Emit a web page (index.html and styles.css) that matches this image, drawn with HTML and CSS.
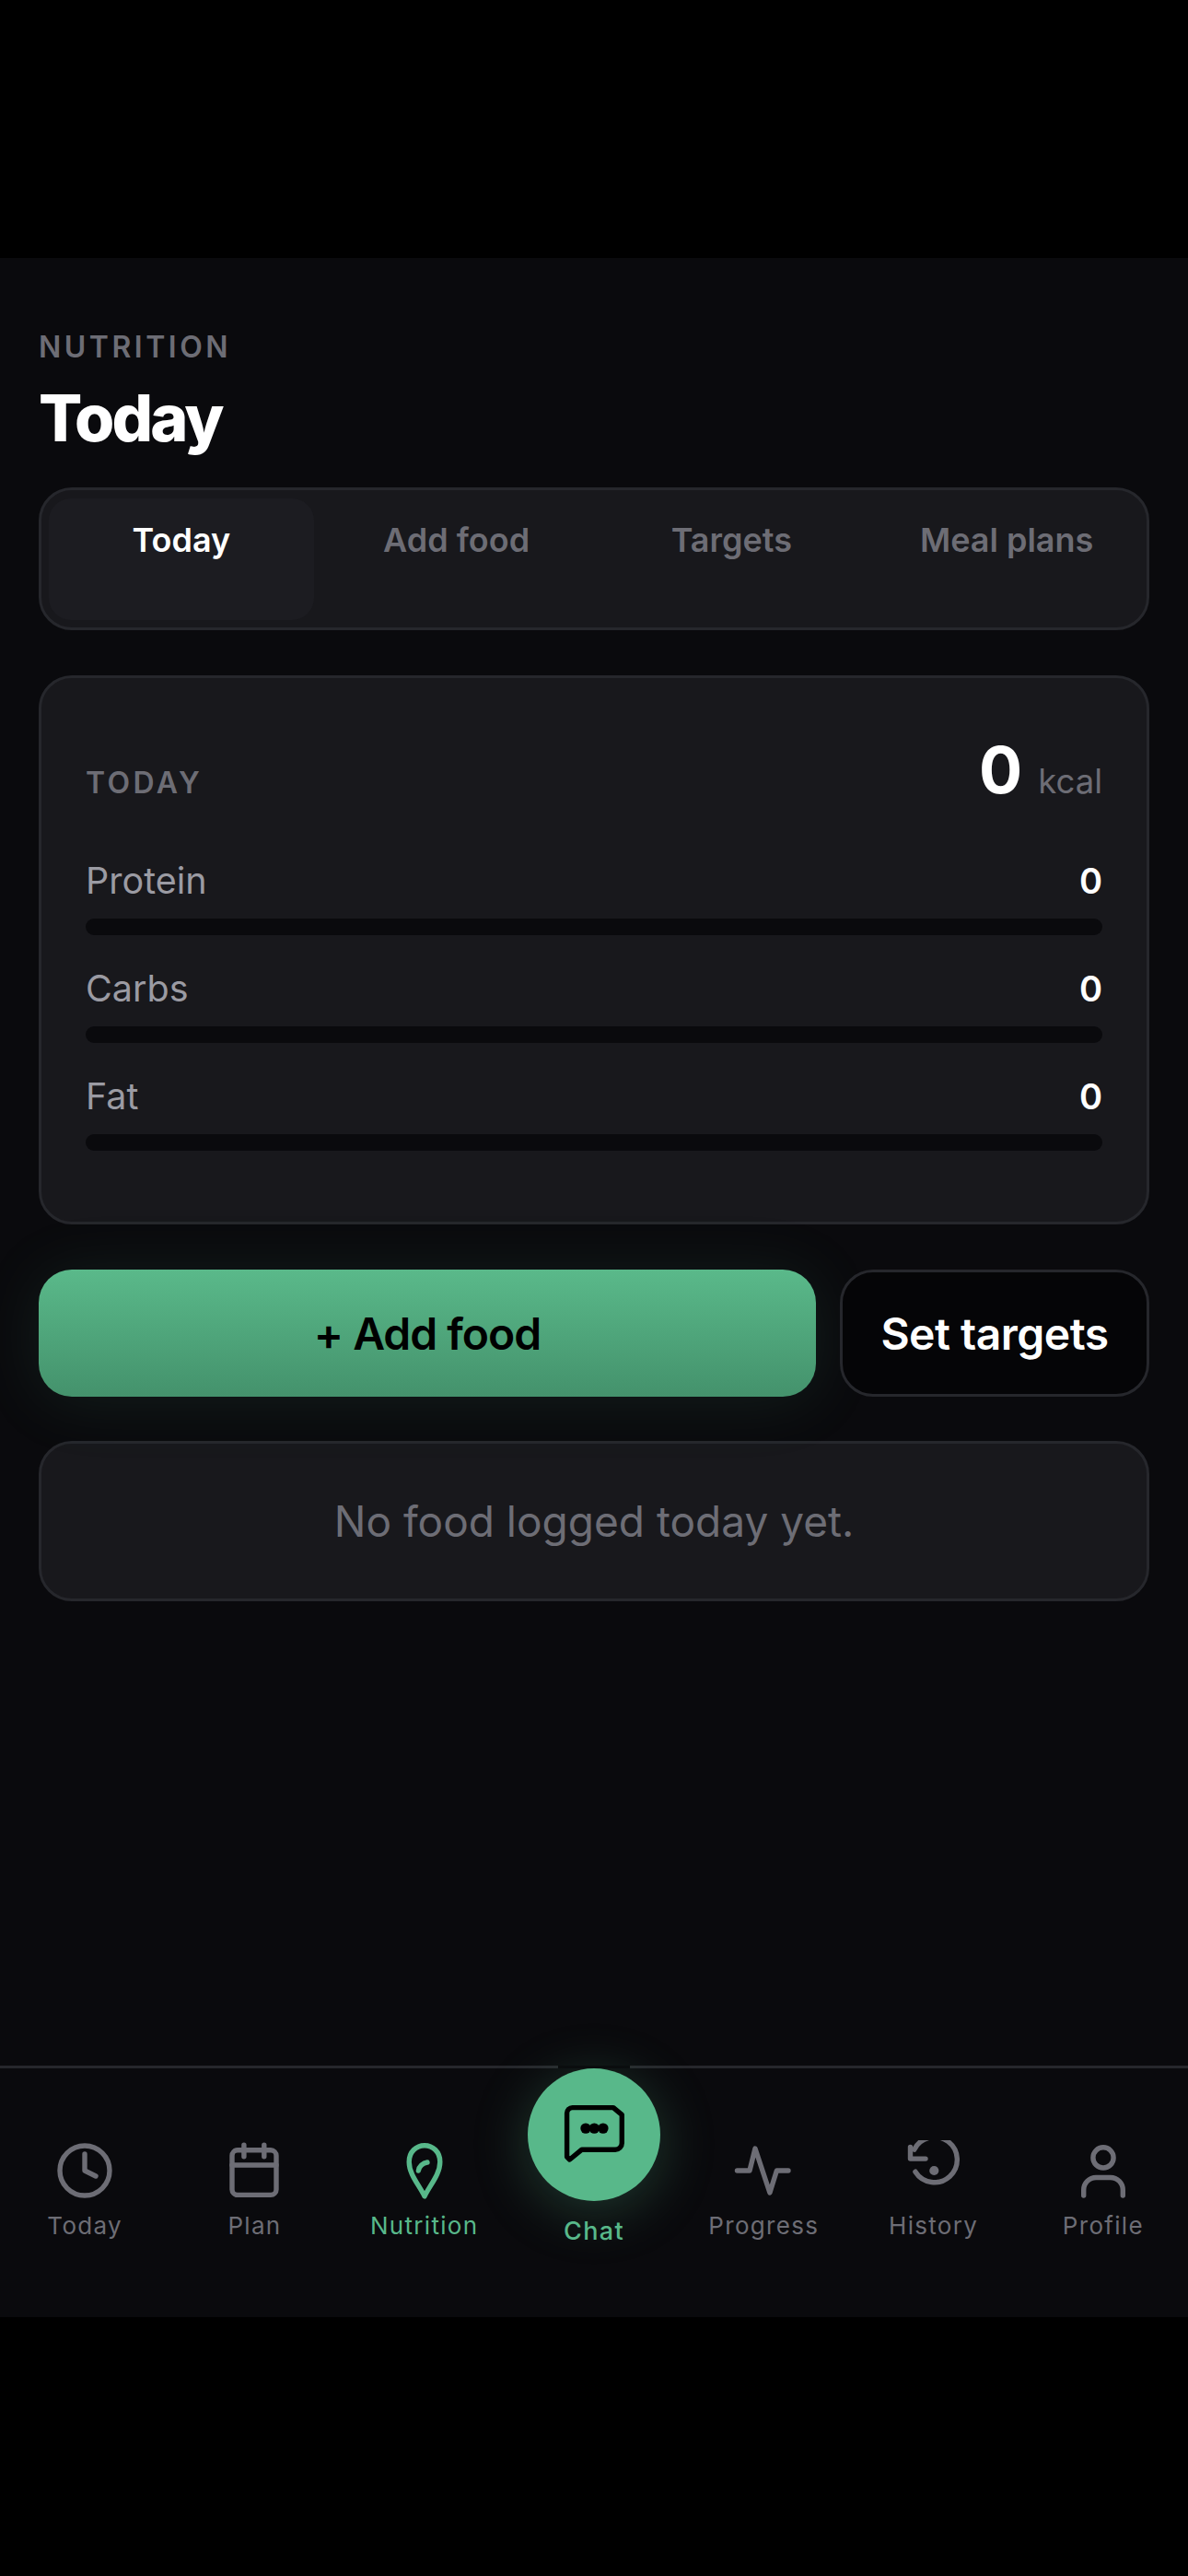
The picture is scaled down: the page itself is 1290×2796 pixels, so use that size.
FILE: index.html
```html
<!DOCTYPE html>
<html lang="en">
<head>
    <meta charset="UTF-8">
    <title>Nutrition</title>
    <link rel="stylesheet" href="styles.css">
</head>
<body>
    <div class="app">
        <main class="page">
            <p class="eyebrow">NUTRITION</p>
            <h1 class="title">Today</h1>

            <div class="tabs">
                <div class="tab tab-active">Today</div>
                <div class="tab">Add food</div>
                <div class="tab">Targets</div>
                <div class="tab">Meal plans</div>
            </div>

            <section class="card summary">
                <div class="summary-head">
                    <span class="summary-label">TODAY</span>
                    <span class="kcal"><b class="kcal-num">0</b><span class="kcal-unit">kcal</span></span>
                </div>
                <div class="macro">
                    <div class="macro-row"><span class="macro-name">Protein</span><span class="macro-val">0</span></div>
                    <div class="macro-bar"></div>
                </div>
                <div class="macro">
                    <div class="macro-row"><span class="macro-name">Carbs</span><span class="macro-val">0</span></div>
                    <div class="macro-bar"></div>
                </div>
                <div class="macro">
                    <div class="macro-row"><span class="macro-name">Fat</span><span class="macro-val">0</span></div>
                    <div class="macro-bar"></div>
                </div>
            </section>

            <div class="actions">
                <button class="btn btn-primary">+ Add food</button>
                <button class="btn btn-ghost">Set targets</button>
            </div>

            <section class="card empty">No food logged today yet.</section>
        </main>

        <nav class="nav">
            <div class="nav-item">
                <svg class="nav-icon" viewBox="0 0 24 24"><circle cx="12" cy="12" r="9"/><path d="M12 6v6l4 2"/></svg>
                <span class="nav-label">Today</span>
            </div>
            <div class="nav-item">
                <svg class="nav-icon" viewBox="0 0 24 24"><rect x="4" y="4.6" width="16" height="16.2" rx="2"/><path d="M8.3 2.7v4.2M15.6 2.7v4.2M4 10h16"/></svg>
                <span class="nav-label">Plan</span>
            </div>
            <div class="nav-item nav-on">
                <svg class="nav-icon" viewBox="0 0 24 24"><path d="M12 21.300C10.300 17.500 6.400 13.500 6.400 8.800 6.400 5.200 9 2.900 12 2.900s5.600 2.300 5.600 5.900c0 4.700-3.900 8.700-5.600 12.500z"/><path d="M9.800 12c.2-1.500 1.600-2.800 3.200-3"/></svg>
                <span class="nav-label">Nutrition</span>
            </div>
            <div class="nav-item nav-chat">
                <div class="chat-btn">
                    <svg class="nav-icon" viewBox="0 0 24 24"><path d="M4.200 2.200H19l3.100 2.600V15a2.400 2.400 0 0 1-2.400 2.400H7.600L3.200 21l-1-1V4.200a2 2 0 0 1 2-2z"/><circle class="chat-dot" cx="9" cy="9.700" r="1.900"/><circle class="chat-dot" cx="12.100" cy="9.700" r="1.900"/><circle class="chat-dot" cx="15.300" cy="9.700" r="1.900"/></svg>
                </div>
                <span class="nav-label">Chat</span>
            </div>
            <div class="nav-item">
                <svg class="nav-icon" viewBox="0 0 24 24"><path d="M2.500 12H7L9 4l5.300 16 2.500-8H21"/></svg>
                <span class="nav-label">Progress</span>
            </div>
            <div class="nav-item">
                <svg class="nav-icon nav-icon-cut" viewBox="0 0 24 24"><path d="M5.300 12.400A8.200 8.200 0 1 0 4.900 4.400"/><path d="M3.500 3.500v4.200H9"/><circle class="hist-dot" cx="12.100" cy="12" r="1.700"/></svg>
                <span class="nav-label">History</span>
            </div>
            <div class="nav-item">
                <svg class="nav-icon" viewBox="0 0 24 24"><circle cx="12" cy="7.300" r="3.700"/><path d="M4.900 21v-2a4.500 4.500 0 0 1 4.500-4.500h5.200a4.500 4.500 0 0 1 4.500 4.500v2"/></svg>
                <span class="nav-label">Profile</span>
            </div>
        </nav>
    </div>
</body>
</html>
```

FILE: styles.css
```css
* {
    margin: 0;
    padding: 0;
    box-sizing: border-box;
}
html, body {
    background: #000;
}
body {
    padding-top: 280px;
    height: 2796px;
    font-family: Inter, "Noto Sans", sans-serif;
    color: #fff;
}
.app {
    height: 2235px;
    background: #0a0a0d;
    display: flex;
    flex-direction: column;
}
.page {
    flex: 1;
    padding: 77px 42px 0;
}

/* header */
.eyebrow {
    font-size: 32px;
    line-height: 40px;
    letter-spacing: 3.5px;
    font-weight: 600;
    color: #6d6d75;
}
.title {
    margin-top: 15px;
    font-size: 70px;
    line-height: 84px;
    font-weight: 800;
    letter-spacing: -2.9px;
}

/* tabs */
.tabs {
    margin-top: 33px;
    height: 155px;
    padding: 9px 8px 8px;
    display: flex;
    gap: 11px;
    background: #18181c;
    border: 3px solid #26272c;
    border-radius: 36px;
}
.tab {
    flex: 1;
    padding-top: 24px;
    border-radius: 24px;
    text-align: center;
    font-size: 36px;
    line-height: 42px;
    font-weight: 600;
    color: #6d6d75;
}
.tab-active {
    background: #1c1c21;
    color: #fff;
}

/* cards */
.card {
    background: #18181c;
    border: 3px solid #26272c;
    border-radius: 36px;
}
.summary {
    margin-top: 49px;
    height: 596px;
    padding: 58px 48px 0;
}
.summary-head {
    display: flex;
    justify-content: space-between;
    align-items: baseline;
}
.summary-label {
    font-size: 32px;
    letter-spacing: 3.4px;
    font-weight: 600;
    color: #6d6d75;
}
.kcal-num {
    font-size: 70px;
    line-height: 84px;
    font-weight: 700;
}
.kcal-unit {
    margin-left: 17px;
    font-size: 36.5px;
    color: #6d6d75;
}
.macro {
    margin-top: 55px;
}
.macro + .macro {
    margin-top: 35px;
}
.macro-row {
    display: flex;
    justify-content: space-between;
    align-items: baseline;
    line-height: 46px;
}
.macro-name {
    font-size: 39.5px;
    color: #9b9ba3;
}
.macro-val {
    font-size: 38px;
    font-weight: 600;
}
.macro-bar {
    margin-top: 18px;
    height: 18px;
    background: #0a0a0d;
    border-radius: 9px;
}

/* buttons */
.actions {
    margin-top: 49px;
    display: flex;
    gap: 26px;
}
.btn {
    height: 138px;
    border-radius: 36px;
    font-family: inherit;
    font-size: 48px;
    font-weight: 600;
}
.btn-primary {
    flex: 1;
    border: none;
    color: #000;
    letter-spacing: -1px;
    background: linear-gradient(180deg, #5ab98a, #44926c);
    box-shadow: 0 4px 70px rgba(90, 185, 138, 0.12);
}
.btn-ghost {
    width: 336px;
    color: #fff;
    letter-spacing: -0.5px;
    background: #050507;
    border: 3px solid #26272c;
}
.empty {
    margin-top: 48px;
    height: 174px;
    display: flex;
    align-items: center;
    justify-content: center;
    font-size: 46px;
    color: #6d6d75;
}

/* bottom nav */
.nav {
    height: 273px;
    display: grid;
    grid-template-columns: repeat(7, 1fr);
    border-top: 3px solid #26272c;
}
.nav-item {
    display: flex;
    flex-direction: column;
    align-items: center;
    padding-top: 75px;
    color: #6d6d75;
}
.nav-icon {
    width: 72px;
    height: 72px;
    fill: none;
    stroke: currentColor;
    stroke-width: 1.8;
    stroke-linecap: round;
    stroke-linejoin: round;
}
.nav-icon-cut {
    clip-path: inset(3px 0 0 0);
}
.hist-dot {
    fill: currentColor;
    stroke: none;
}
.nav-label {
    margin-top: 7px;
    font-size: 26px;
    line-height: 34px;
    letter-spacing: 1.3px;
}
.nav-on {
    color: #58b88a;
}
.nav-chat {
    position: relative;
    padding-top: 0;
    color: #58b88a;
}
/* gap in the divider above the round button */
.nav-chat::before {
    content: "";
    position: absolute;
    top: -3px;
    left: 50%;
    width: 78px;
    height: 3px;
    margin-left: -39px;
    background: #0a0d0e;
}
.chat-btn {
    width: 144px;
    height: 144px;
    flex-shrink: 0;
    display: flex;
    align-items: center;
    justify-content: center;
    border-radius: 50%;
    background: #58b88a;
    color: #000;
    box-shadow: 0 10px 60px rgba(88, 184, 138, 0.28);
}
.chat-dot {
    fill: #000;
    stroke: none;
}
.nav-chat .nav-label {
    margin-top: 16px;
    font-weight: 500;
    font-size: 27px;
}
```
